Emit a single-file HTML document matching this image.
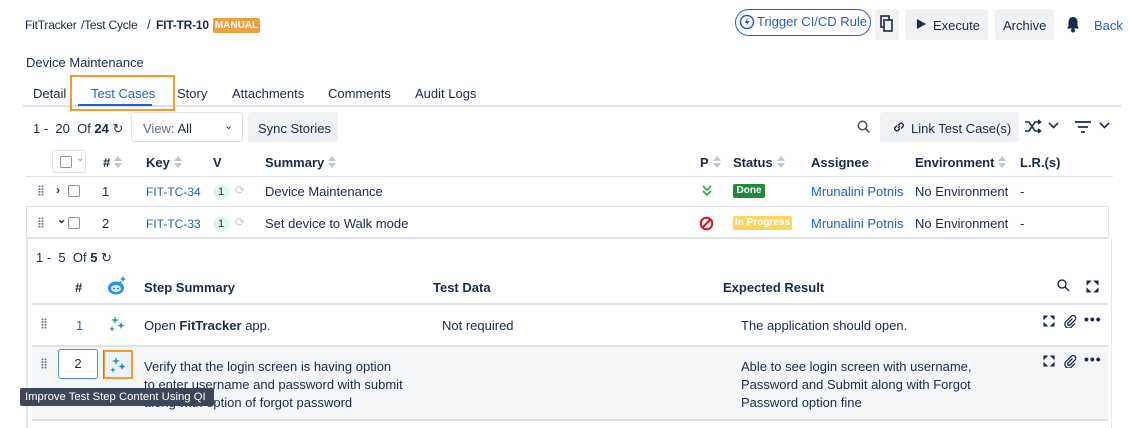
<!DOCTYPE html>
<html><head><meta charset="utf-8"><style>
*{margin:0;padding:0;box-sizing:border-box}
body{width:1129px;height:428px;overflow:hidden;background:#fff;font-family:"Liberation Sans",sans-serif;font-size:13px;color:#172b4d;position:relative}
.a{position:absolute;white-space:nowrap}
.b{font-weight:bold}
.lnk{color:#1f5ed6}
.btn{position:absolute;background:#f0f1f3;border-radius:3px}
.hl{position:absolute;height:1px;background:#dfe1e6}
.sort{display:inline-block;width:8px;height:12px;vertical-align:-1px;margin-left:4px;position:relative}
.sort:before{content:"";position:absolute;left:0;top:0;border:4px solid transparent;border-bottom:5px solid #c1c7d0;border-top:0}
.sort:after{content:"";position:absolute;left:0;top:7px;border:4px solid transparent;border-top:5px solid #c1c7d0;border-bottom:0}
.cb{position:absolute;width:12px;height:12px;border:1px solid #8993a4;border-radius:2px;background:#fff}
.grip{position:absolute;width:6px;height:11px;background:radial-gradient(circle,#6b778c 0.9px,transparent 1.1px) 0 0/3px 2.75px}
</style></head><body>

<div class="a" style="left:25px;top:18px;font-size:12px;letter-spacing:-0.2px">FitTracker</div>
<div class="a" style="left:81px;top:18px;font-size:12px;letter-spacing:-0.2px">/Test Cycle</div>
<div class="a" style="left:147px;top:17px">/</div>
<div class="a b" style="left:156px;top:18px;font-size:12px;letter-spacing:-0.2px">FIT-TR-10</div>
<div class="a b" style="left:213px;top:18px;width:47px;height:15px;background:#f0a040;color:#fff;font-size:10px;line-height:15px;text-align:center;border-radius:2px">MANUAL</div>

<div class="a" style="left:735px;top:9px;width:136px;height:27px;border:1.5px solid #1f5ed6;border-radius:14px;color:#1f5ed6;line-height:24px;padding-left:21px">Trigger CI/CD Rule</div>
<svg class="a" style="left:739px;top:14px" width="16" height="16" viewBox="0 0 16 16"><circle cx="8" cy="8" r="6.5" fill="none" stroke="#1f5ed6" stroke-width="1.5"/><path d="M9 3.5L5.5 9H8L7 12.5L10.5 7H8z" fill="#1f5ed6"/></svg>
<div class="btn" style="left:875px;top:9px;width:24px;height:31px"></div>
<svg class="a" style="left:880px;top:15px" width="14" height="18" viewBox="0 0 14 18"><rect x="1" y="1" width="8" height="11" fill="none" stroke="#172b4d" stroke-width="1.6"/><rect x="4" y="5" width="8" height="11" fill="#f0f1f3" stroke="#172b4d" stroke-width="1.6"/></svg>
<div class="btn" style="left:905px;top:9px;width:83px;height:31px"></div>
<svg class="a" style="left:917px;top:19px" width="9" height="10"><path d="M0 0L9 5L0 10z" fill="#172b4d"/></svg>
<div class="a" style="left:933px;top:18px">Execute</div>
<div class="btn" style="left:995px;top:9px;width:59px;height:31px"></div>
<div class="a" style="left:1003px;top:18px">Archive</div>
<svg class="a" style="left:1065px;top:16px" width="16" height="17" viewBox="0 0 16 17"><path d="M8 1C5 1 3.5 3.5 3.5 6v4L2 12.5h12L12.5 10V6C12.5 3.5 11 1 8 1z" fill="#172b4d"/><circle cx="8" cy="14.5" r="2" fill="#172b4d"/></svg>
<div class="a lnk" style="left:1094px;top:18px">Back</div>

<div class="a" style="left:26px;top:55px">Device Maintenance</div>
<div class="a" style="left:33px;top:86px">Detail</div>
<div class="a lnk" style="left:91px;top:86px">Test Cases</div>
<div class="a" style="left:177px;top:86px">Story</div>
<div class="a" style="left:232px;top:86px">Attachments</div>
<div class="a" style="left:328px;top:86px">Comments</div>
<div class="a" style="left:415px;top:86px">Audit Logs</div>
<div class="hl" style="left:23px;top:105px;width:1098px;height:2px"></div>
<div class="a" style="left:78px;top:104px;width:74px;height:2px;background:#1f5ed6"></div>
<div class="a" style="left:70px;top:75px;width:105px;height:36px;border:2px solid #f59a2f"></div>

<div class="a" style="left:33px;top:121px">1 - &nbsp;20 &nbsp;Of <b>24</b> ↻</div>
<div class="a" style="left:131px;top:112px;width:112px;height:30px;border:1px solid #dfe1e6;border-radius:3px;padding:8px 0 0 11px;color:#5e6c84">View: <span style="color:#172b4d">All</span><span style="position:absolute;left:92px;top:6px;color:#172b4d;font-size:11px">⌄</span></div>
<div class="btn" style="left:248px;top:112px;width:90px;height:30px"></div>
<div class="a" style="left:258px;top:121px">Sync Stories</div>

<svg class="a" style="left:857px;top:120px" width="14" height="14"><circle cx="5.5" cy="5.5" r="4.2" fill="none" stroke="#42526e" stroke-width="1.5"/><path d="M8.5 8.5L12.5 12.5" stroke="#42526e" stroke-width="1.6"/></svg>
<div class="btn" style="left:880px;top:112px;width:139px;height:30px"></div>
<svg class="a" style="left:892px;top:120px" width="14" height="14" viewBox="0 0 14 14"><path d="M6 8L8 6M5 5.5L3 7.5a2.2 2.2 0 003 3L8 8.5M9 8.5L11 6.5a2.2 2.2 0 00-3-3L6 5.5" fill="none" stroke="#172b4d" stroke-width="1.4"/></svg>
<div class="a" style="left:911px;top:121px">Link Test Case(s)</div>
<svg class="a" style="left:1024px;top:119px" width="18" height="15" viewBox="0 0 18 15"><path d="M1 3h4l6 9h5M1 12h4l6-9h5M14 1l2.5 2L14 5M14 10l2.5 2L14 14" fill="none" stroke="#172b4d" stroke-width="1.6"/></svg>
<svg class="a" style="left:1048px;top:122px" width="11" height="8"><path d="M1 1l4.5 4.5L10 1" fill="none" stroke="#172b4d" stroke-width="1.6"/></svg>
<svg class="a" style="left:1075px;top:120px" width="16" height="13"><path d="M0 2h16M3 7h10M6 12h4" stroke="#172b4d" stroke-width="1.7"/></svg>
<svg class="a" style="left:1099px;top:122px" width="11" height="8"><path d="M1 1l4.5 4.5L10 1" fill="none" stroke="#172b4d" stroke-width="1.6"/></svg>

<div class="a" style="left:52px;top:150px;width:34px;height:23px;border:1px solid #dfe1e6;border-radius:3px"></div>
<div class="cb" style="left:60px;top:156px"></div>
<div class="a" style="left:76px;top:153px;font-size:10px;color:#8993a4">⌄</div>
<div class="a b" style="left:103px;top:155px">#<span class="sort"></span></div>
<div class="a b" style="left:146px;top:155px">Key<span class="sort"></span></div>
<div class="a b" style="left:213px;top:155px">V</div>
<div class="a b" style="left:265px;top:155px">Summary<span class="sort"></span></div>
<div class="a b" style="left:700px;top:155px">P<span class="sort"></span></div>
<div class="a b" style="left:733px;top:155px">Status<span class="sort"></span></div>
<div class="a b" style="left:811px;top:155px">Assignee</div>
<div class="a b" style="left:915px;top:155px">Environment<span class="sort"></span></div>
<div class="a b" style="left:1020px;top:155px">L.R.(s)</div>
<div class="hl" style="left:26px;top:176px;width:1087px"></div>

<!-- row1 -->
<div class="grip" style="left:38px;top:185px"></div>
<div class="a b" style="left:56px;top:183px;font-size:12px">›</div>
<div class="cb" style="left:68px;top:185px"></div>
<div class="a" style="left:102px;top:184px">1</div>
<div class="a lnk" style="left:146px;top:185px;font-size:12px">FIT-TC-34</div>
<div class="a" style="left:213px;top:185px;width:16px;height:14px;border-radius:7px;background:#dff7ee;font-size:11px;text-align:center;line-height:14px">1</div>
<div class="a" style="left:235px;top:183px;color:#c1c7d0;font-size:12px">⟳</div>
<div class="a" style="left:265px;top:184px">Device Maintenance</div>
<svg class="a" style="left:702px;top:185px" width="10" height="12"><path d="M1 1l4 4 4-4M1 6l4 4 4-4" fill="none" stroke="#36a852" stroke-width="1.8"/></svg>
<div class="a b" style="left:733px;top:184px;width:32px;height:14px;background:#1f8a3a;color:#fff;font-size:10px;line-height:14px;text-align:center;border-radius:2px">Done</div>
<div class="a lnk" style="left:811px;top:184px">Mrunalini Potnis</div>
<div class="a" style="left:915px;top:184px">No Environment</div>
<div class="a" style="left:1020px;top:184px">-</div>

<!-- row2 -->
<div class="a" style="left:26px;top:206px;width:1083px;height:33px;border:1px solid #dfe1e6;border-bottom:2px solid #dfe1e6"></div>
<div class="grip" style="left:38px;top:217px"></div>
<div class="a b" style="left:57px;top:213px;font-size:11px">⌄</div>
<div class="cb" style="left:68px;top:217px"></div>
<div class="a" style="left:102px;top:216px">2</div>
<div class="a lnk" style="left:146px;top:217px;font-size:12px">FIT-TC-33</div>
<div class="a" style="left:213px;top:217px;width:16px;height:14px;border-radius:7px;background:#dff7ee;font-size:11px;text-align:center;line-height:14px">1</div>
<div class="a" style="left:235px;top:215px;color:#c1c7d0;font-size:12px">⟳</div>
<div class="a" style="left:265px;top:216px">Set device to Walk mode</div>
<svg class="a" style="left:699px;top:216px" width="15" height="15"><circle cx="7.5" cy="7.5" r="5.8" fill="none" stroke="#d01919" stroke-width="2"/><path d="M3.5 11.5L11.5 3.5" stroke="#d01919" stroke-width="2"/></svg>
<div class="a b" style="left:733px;top:216px;width:59px;height:14px;background:#fdd55c;color:#fff;font-size:10px;line-height:14px;text-align:center;border-radius:2px">In Progress</div>
<div class="a lnk" style="left:811px;top:216px">Mrunalini Potnis</div>
<div class="a" style="left:915px;top:216px">No Environment</div>
<div class="a" style="left:1020px;top:216px">-</div>

<!-- sub panel -->
<div class="a" style="left:26px;top:239px;width:2px;height:189px;background:#e4e6ea"></div>
<div class="a" style="left:1111px;top:239px;width:1px;height:189px;background:#e4e6ea"></div>
<div class="a" style="left:36px;top:250px">1 - &nbsp;5 &nbsp;Of <b>5</b> ↻</div>
<div class="a b" style="left:75px;top:280px">#</div>
<svg class="a" style="left:106px;top:274px" width="22" height="22" viewBox="0 0 22 22"><ellipse cx="10" cy="14" rx="8" ry="6.5" fill="#2b8fe8"/><ellipse cx="10" cy="14.5" rx="5" ry="3.5" fill="#d7ecff"/><circle cx="8" cy="14.5" r="0.9" fill="#1a5fb0"/><circle cx="12" cy="14.5" r="0.9" fill="#1a5fb0"/><path d="M17 2l1 2 2 1-2 1-1 2-1-2-2-1 2-1z" fill="#2b8fe8"/><circle cx="14.5" cy="8" r="1" fill="#2b8fe8"/></svg>
<div class="a b" style="left:144px;top:280px">Step Summary</div>
<div class="a b" style="left:433px;top:280px">Test Data</div>
<div class="a b" style="left:723px;top:280px">Expected Result</div>
<svg class="a" style="left:1057px;top:279px" width="13" height="13"><circle cx="5" cy="5" r="4" fill="none" stroke="#172b4d" stroke-width="1.4"/><path d="M8 8L12 12" stroke="#172b4d" stroke-width="1.5"/></svg>
<svg class="a" style="left:1086px;top:280px" width="13" height="13" viewBox="0 0 13 13"><path d="M1 1h3.5L1 4.5zM12 1H8.5L12 4.5zM1 12h3.5L1 8.5zM12 12H8.5L12 8.5z" fill="#172b4d" stroke="#172b4d" stroke-width="1"/></svg>
<div class="hl" style="left:32px;top:303px;width:1076px;height:2px"></div>

<div class="grip" style="left:41px;top:318px"></div>
<div class="a" style="left:76px;top:318px;color:#1f5ed6">1</div>
<svg class="a" style="left:108px;top:315px" width="18" height="18" viewBox="0 0 18 18"><path d="M7 1l1 3 3 1-3 1-1 3-1-3-3-1 3-1z" fill="#23a77a"/><path d="M13 7l1 2.5 2.5 1-2.5 1L13 14l-1-2.5-2.5-1 2.5-1z" fill="#2b7be0"/><path d="M4 11l.8 2 2 .8-2 .8L4 17l-.8-2.4-2-.8 2-.8z" fill="#23a77a"/></svg>
<div class="a" style="left:144px;top:318px">Open <b>FitTracker</b> app.</div>
<div class="a" style="left:442px;top:318px">Not required</div>
<div class="a" style="left:741px;top:318px">The application should open.</div>
<svg class="a" style="left:1043px;top:315px" width="12" height="12" viewBox="0 0 13 13"><path d="M1 1h3.5L1 4.5zM12 1H8.5L12 4.5zM1 12h3.5L1 8.5zM12 12H8.5L12 8.5z" fill="#172b4d" stroke="#172b4d" stroke-width="1"/></svg>
<svg class="a" style="left:1063px;top:314px" width="14" height="14" viewBox="0 0 14 14"><path d="M9.5 4.5L5 9a1.4 1.4 0 002 2l5-5a2.6 2.6 0 00-3.7-3.7L3 7.6a3.8 3.8 0 005.4 5.4L12 9.4" fill="none" stroke="#172b4d" stroke-width="1.3"/></svg>
<div class="a b" style="left:1084px;top:311px;font-size:14px;letter-spacing:1px">•••</div>
<div class="hl" style="left:32px;top:345px;width:1076px;height:2px"></div>

<div class="a" style="left:32px;top:347px;width:1076px;height:72px;background:#f4f5f7"></div>
<div class="hl" style="left:32px;top:419px;width:1076px;height:2px"></div>
<div class="grip" style="left:41px;top:358px"></div>
<div class="a" style="left:58px;top:349px;width:40px;height:30px;border:1px solid #4a8be8;border-radius:3px;background:#fff;text-align:center;line-height:28px">2</div>
<div class="a" style="left:103px;top:350px;width:30px;height:29px;border:2px solid #f59a2f;background:#eaf2fc"></div>
<div class="a" style="left:103px;top:350px;width:1px;height:29px;background:#30b84a"></div>
<svg class="a" style="left:109px;top:356px" width="18" height="18" viewBox="0 0 18 18"><path d="M7 1l1 3 3 1-3 1-1 3-1-3-3-1 3-1z" fill="#23a77a"/><path d="M13 7l1 2.5 2.5 1-2.5 1L13 14l-1-2.5-2.5-1 2.5-1z" fill="#2b7be0"/><path d="M4 11l.8 2 2 .8-2 .8L4 17l-.8-2.4-2-.8 2-.8z" fill="#23a77a"/></svg>
<div class="a" style="left:144px;top:358px;line-height:18px">Verify that the login screen is having option<br>to enter username and password with submit<br>along with option of forgot password</div>
<div class="a" style="left:741px;top:358px;line-height:18px">Able to see login screen with username,<br>Password and Submit along with Forgot<br>Password option fine</div>
<svg class="a" style="left:1043px;top:355px" width="12" height="12" viewBox="0 0 13 13"><path d="M1 1h3.5L1 4.5zM12 1H8.5L12 4.5zM1 12h3.5L1 8.5zM12 12H8.5L12 8.5z" fill="#172b4d" stroke="#172b4d" stroke-width="1"/></svg>
<svg class="a" style="left:1063px;top:354px" width="14" height="14" viewBox="0 0 14 14"><path d="M9.5 4.5L5 9a1.4 1.4 0 002 2l5-5a2.6 2.6 0 00-3.7-3.7L3 7.6a3.8 3.8 0 005.4 5.4L12 9.4" fill="none" stroke="#172b4d" stroke-width="1.3"/></svg>
<div class="a b" style="left:1084px;top:351px;font-size:14px;letter-spacing:1px">•••</div>

<div class="a" style="left:20px;top:388px;width:194px;height:18px;background:#3d4758;color:#fff;font-size:11.3px;line-height:18px;padding-left:5px;border-radius:2px;overflow:hidden">Improve Test Step Content Using QI</div>
</body></html>
